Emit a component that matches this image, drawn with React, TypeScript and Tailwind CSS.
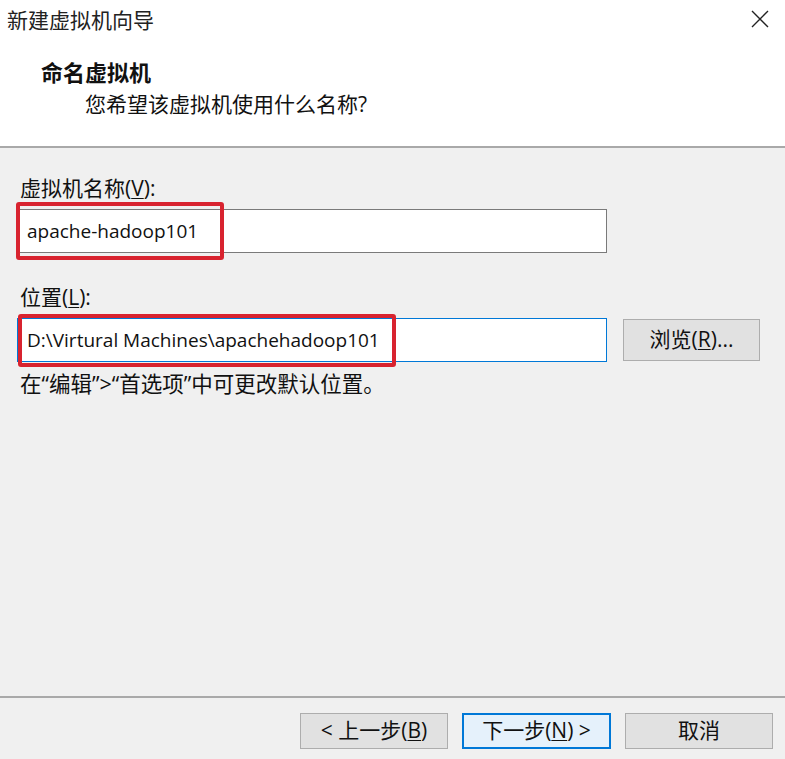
const font = { fontFamily: '"Segoe UI", "Open Sans", "Noto Sans CJK SC", sans-serif' }

function Mnemonic({ children }: { children: string }) {
  return <span className="underline underline-offset-2 decoration-1">{children}</span>
}

function Highlight({ className }: { className: string }) {
  return (
    <div
      aria-hidden="true"
      className={`absolute border-[4px] border-[#d8232f] rounded-[3px] pointer-events-none ${className}`}
    />
  )
}

function WinButton({ children, primary = false, className = "" }: { children: React.ReactNode; primary?: boolean; className?: string }) {
  return (
    <button
      className={
        "h-[36px] text-[21px] text-[#111] flex items-center justify-center " +
        (primary
          ? "bg-[#e5f1fb] border-2 border-[#0078d7] "
          : "bg-[#e1e1e1] border border-[#adadad] ") +
        className
      }
    >
      {children}
    </button>
  )
}

export default function App() {
  return (
    <div className="w-[785px] h-[759px] flex flex-col bg-[#f0f0f0] text-[#111] overflow-hidden" style={font}>
      <header className="h-[148px] bg-white border-b-2 border-[#a9a9a9] flex flex-col">
        <div className="flex items-start justify-between pl-[7px] pr-[16px] pt-[6px]">
          <span className="text-[21px] leading-[28px] text-[#222]">新建虚拟机向导</span>
          <svg width="18" height="18" viewBox="0 0 18 18" className="mt-[4px]">
            <path d="M1 1 L17 17 M17 1 L1 17" stroke="#222" strokeWidth="1.4" fill="none" />
          </svg>
        </div>
        <h1 className="pl-[41px] mt-[24px] text-[22px] leading-[28px] font-bold">命名虚拟机</h1>
        <p className="pl-[85px] mt-[4px] text-[21px] leading-[28px]">您希望该虚拟机使用什么名称?</p>
      </header>

      <main className="flex-1 px-[17px] pt-[26px]">
        <label className="block pl-[3px] text-[21px] leading-[28px]">
          虚拟机名称(<Mnemonic>V</Mnemonic>):
        </label>
        <div className="relative mt-[7px] w-[590px] h-[44px] bg-white border border-[#7a7a7a] flex items-center pl-[9px] text-[19px]">
          apache-hadoop101
          <Highlight className="-left-[2px] -top-[8px] w-[208px] h-[58px]" />
        </div>

        <label className="block mt-[30px] pl-[3px] text-[21px] leading-[28px]">
          位置(<Mnemonic>L</Mnemonic>):
        </label>
        <div className="flex items-center gap-[16px] mt-[7px]">
          <div className="relative w-[590px] h-[44px] bg-white border border-[#0078d7] flex items-center pl-[9px] text-[19px]">
            D:\Virtural Machines\apachehadoop101
            <Highlight className="left-[0px] -top-[5px] w-[378px] h-[53px]" />
          </div>
          <WinButton className="w-[137px] h-[42px]">
            浏览(<Mnemonic>R</Mnemonic>)...
          </WinButton>
        </div>
        <p className="mt-[8px] pl-[3px] text-[21.5px] leading-[28px]">在“编辑”&gt;“首选项”中可更改默认位置。</p>
      </main>

      <footer className="h-[63px] border-t-2 border-[#a9a9a9] flex items-start justify-end gap-[14px] pt-[15px] pr-[12px]">
        <WinButton className="w-[148px]">
          &lt; 上一步(<Mnemonic>B</Mnemonic>)
        </WinButton>
        <WinButton primary className="w-[149px]">
          下一步(<Mnemonic>N</Mnemonic>) &gt;
        </WinButton>
        <WinButton className="w-[148px]">取消</WinButton>
      </footer>
    </div>
  )
}
